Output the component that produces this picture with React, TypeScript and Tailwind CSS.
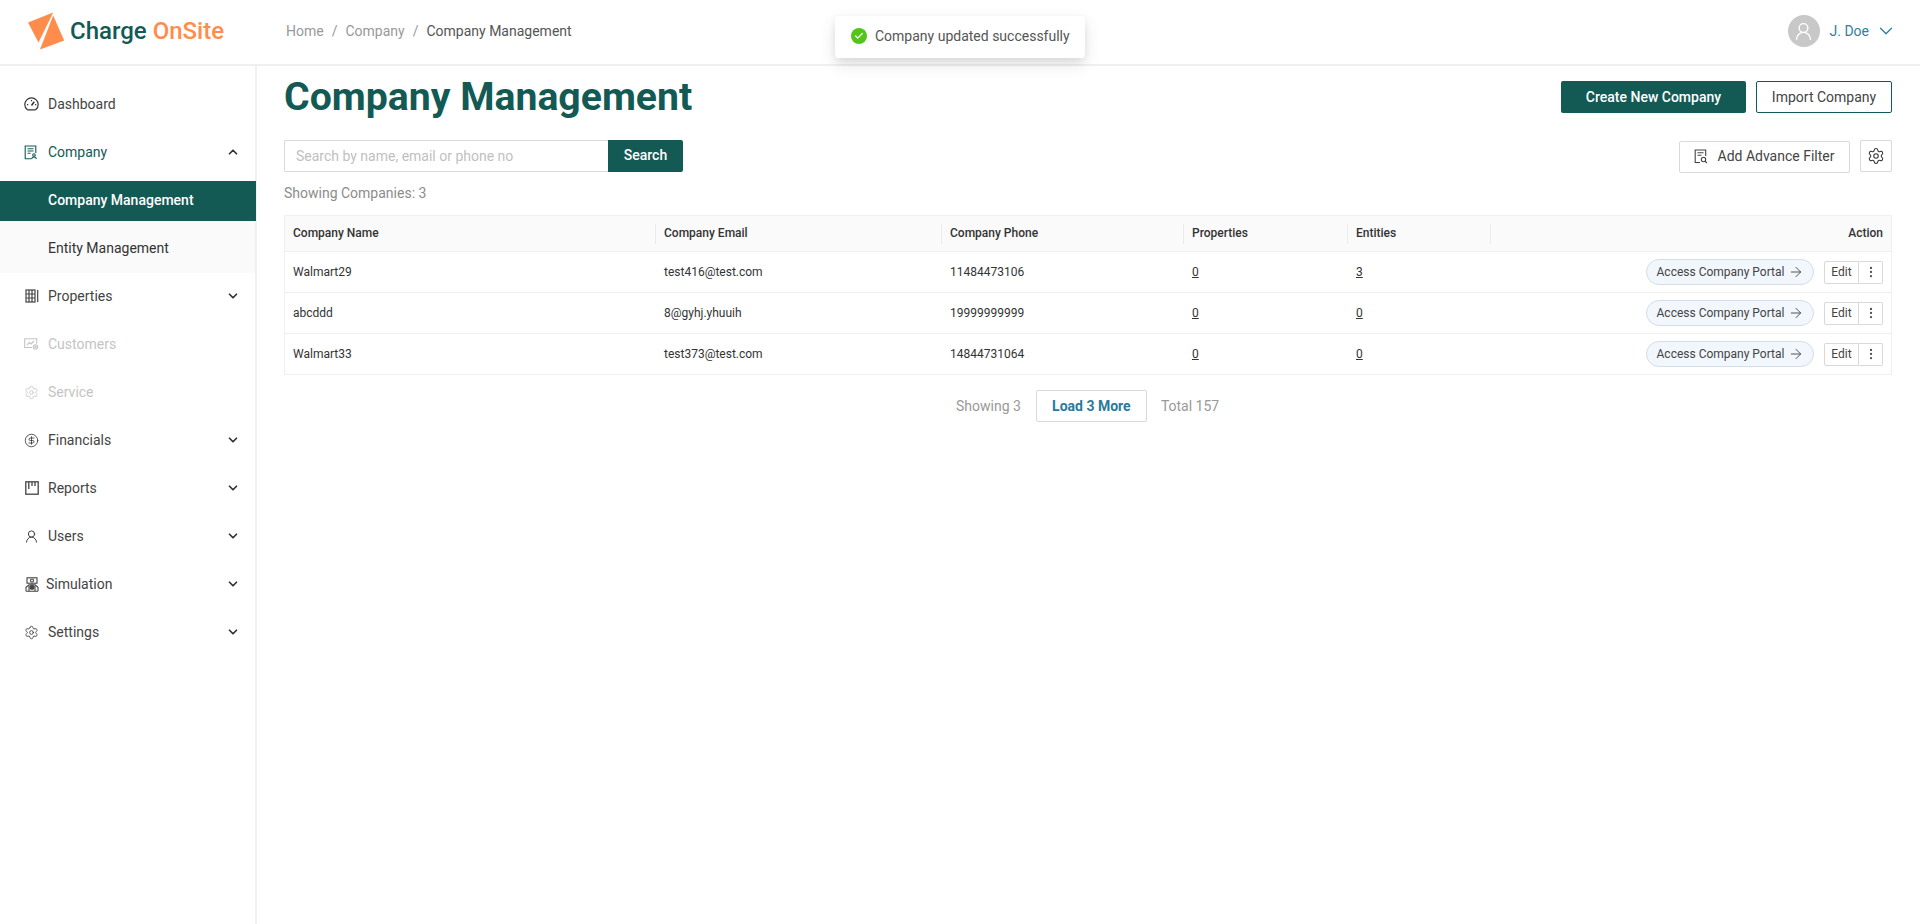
import React from "react";
import { Settings, CircleDollarSign, UserRound, ArrowRight, EllipsisVertical, ChevronDown, ChevronUp, Check } from "lucide-react";

const GaugeIcon = () => (
  <svg viewBox="0 0 15 14" width="15" height="14" fill="none" stroke="#333" strokeWidth="1.2">
    <path d="M3.2 12.6C1.6 11.4.8 9.6.8 7.6a6.7 6.7 0 0 1 13.4 0c0 2-.8 3.8-2.4 5-.2.2-.5.3-.8.3H4c-.3 0-.6-.1-.8-.3Z" />
    <path d="M7.5 8.5L10.2 4.8" strokeWidth="1.5" />
    <path d="M3 7.6h1.2M7.5 3v1.2M11 7.6h1.2" />
  </svg>
);
const CompanyIcon = ({ className = "" }: { className?: string }) => (
  <svg viewBox="0 0 14 15" width="14" height="15" fill="none" stroke="currentColor" strokeWidth="1.1" className={className}>
    <path d="M7.5 13.8H1.2V1h10.6v7" />
    <path d="M3.5 3.8h6M3.5 6h6M3.5 8.2h3" />
    <circle cx="10" cy="10" r="1.3" />
    <path d="M7.6 14c.3-1.4 1.2-2 2.4-2s2.1.6 2.4 2" />
  </svg>
);
const PropertiesIcon = () => (
  <svg viewBox="0 0 14 14" width="14" height="14" fill="none" stroke="#444" strokeWidth="1.2">
    <rect x="1" y="1" width="9" height="12" />
    <path d="M1 5h9M1 9h9M4 1v12M7 1v12M12.7 1v12" />
  </svg>
);
const CustomersIcon = () => (
  <svg viewBox="0 0 15 12" width="15" height="12" fill="none" stroke="currentColor" strokeWidth="1.1">
    <path d="M8 9.5H.7V.7h12v5" />
    <path d="M3 7l2.5-2.4 1.6 1.4L10 3" />
    <circle cx="11.5" cy="9" r="2.2" />
    <circle cx="11.5" cy="9" r=".6" />
  </svg>
);
const ReportsIcon = () => (
  <svg viewBox="0 0 14 14" width="14" height="14" fill="none" stroke="#444" strokeWidth="1.3">
    <rect x=".8" y=".8" width="12.4" height="12.4" />
    <path d="M3.8 1v7M7 1v4M10 1v4" />
  </svg>
);
const SimulationIcon = () => (
  <svg viewBox="0 0 14 15" width="14" height="15" fill="none" stroke="#444" strokeWidth="1.1">
    <rect x="2" y=".8" width="10" height="5.4" />
    <path d="M1 14.3v-4l3-2.5h6l3 2.5v4M1 14.3h12" />
    <circle cx="7" cy="3.5" r="1.5" />
    <circle cx="7" cy="10.2" r="2" fill="#444" />
    <path d="M4 8.5v5.8M10 8.5v5.8" />
  </svg>
);
const FilterDocIcon = () => (
  <svg viewBox="0 0 14 15" width="14" height="15" fill="none" stroke="#444" strokeWidth="1.1">
    <path d="M6 13.5H1.2V1h10.5v6" />
    <path d="M3.5 3.8h6M3.5 6.2h4" />
    <circle cx="9.5" cy="10.5" r="2.2" />
    <path d="M11 12.2l1.8 1.8" />
  </svg>
);
const Logo = () => (
  <svg viewBox="0 0 38 38" width="38" height="38" className="shrink-0">
    <path d="M25.2 0.5L0 10.5 10.5 30.5Z" fill="#ff8c4b" />
    <path d="M25.2 3.5L36.2 28.5 12 37.5Z" fill="#ff8c4b" />
  </svg>
);
const Chevron = ({ up }: { up?: boolean }) =>
  up ? <ChevronUp size={14} strokeWidth={3} className="text-[#333]" /> : <ChevronDown size={14} strokeWidth={3} className="text-[#333]" />;

const items = [
  { label: "Properties", icon: <PropertiesIcon />, chev: true },
  { label: "Customers", icon: <CustomersIcon />, off: true },
  { label: "Service", icon: <Settings size={17} strokeWidth={1.3} />, off: true },
  { label: "Financials", icon: <CircleDollarSign size={17} strokeWidth={1.3} className="text-[#333]" />, chev: true },
  { label: "Reports", icon: <ReportsIcon />, chev: true },
  { label: "Users", icon: <UserRound size={17} strokeWidth={1.5} className="text-[#333]" />, chev: true },
  { label: "Simulation", icon: <SimulationIcon />, chev: true, tight: true },
  { label: "Settings", icon: <Settings size={17} strokeWidth={1.3} className="text-[#333]" />, chev: true },
];

const rows = [
  ["Walmart29", "test416@test.com", "11484473106", "0", "3"],
  ["abcddd", "8@gyhj.yhuuih", "19999999999", "0", "0"],
  ["Walmart33", "test373@test.com", "14844731064", "0", "0"],
];

const cols = "grid grid-cols-[370px_286px_242px_164px_143px_1fr]";

const Head = ({ children, first }: { children: React.ReactNode; first?: boolean }) => (
  <div className={first ? "flex h-5 items-center pb-px pl-2" : "flex h-5 items-center border-l border-[#ececec] pb-px pl-2"}>{children}</div>
);

export default function App() {
  return (
    <div className="relative flex h-screen w-full flex-col overflow-hidden bg-white font-['Roboto',sans-serif] text-sm text-[#333]">
      <header className="flex h-[66px] shrink-0 items-center border-b-2 border-[#f0f0f0] pb-[3px] pl-[28px] pr-[23px]">
        <div className="flex w-[256px] items-center gap-[4px]">
          <Logo />
          <span className="whitespace-nowrap text-[24px] font-medium leading-none text-[#135a55]">
            Charge <span className="text-[#ff8c4b]">OnSite</span>
          </span>
        </div>
        <nav className="ml-[2px] flex items-center gap-[8px] text-sm text-[#999]">
          <span>Home</span>
          <span>/</span>
          <span>Company</span>
          <span>/</span>
          <span className="text-[#555]">Company Management</span>
        </nav>
        <div className="ml-auto flex items-center pt-px">
          <div className="flex h-8 w-8 items-center justify-center rounded-full bg-[#c8c8c8] text-white">
            <UserRound size={21} strokeWidth={1.6} />
          </div>
          <span className="ml-[10px] text-sm text-[#2f7f9f]">J. Doe</span>
          <ChevronDown size={22} strokeWidth={1.4} className="ml-[6px] text-[#2f7f9f]" />
        </div>
      </header>

      <div className="absolute left-[835px] top-[16px] z-10 flex h-[42px] w-[250px] items-center gap-[8px] rounded-[3px] bg-white pb-[2px] pl-[16px] text-sm text-[#555] shadow-[0_6px_16px_rgba(0,0,0,0.12),0_3px_6px_rgba(0,0,0,0.06)]">
        <span className="flex h-4 w-4 items-center justify-center rounded-full bg-[#52c41a]">
          <Check size={10} strokeWidth={3} className="text-white" />
        </span>
        <span>Company updated successfully</span>
      </div>

      <div className="flex min-h-0 flex-1">
        <aside className="w-[257px] shrink-0 border-r-2 border-[#f0f0f0] pt-[14px] text-sm text-[#444]">
          <div className="flex h-12 items-center pl-[24px] pr-[15px]">
            <GaugeIcon />
            <span className="ml-[9px]">Dashboard</span>
          </div>
          <div className="flex h-12 items-center pl-[24px] pr-[15px]">
            <CompanyIcon className="text-[#135a55]" />
            <span className="ml-[10px] text-[#135a55]">Company</span>
            <span className="ml-auto"><Chevron up /></span>
          </div>
          <div className="mt-[5px] bg-[#fafafa]">
            <div className="relative -mr-px flex h-10 items-center bg-[#135a55] pb-[2px] pl-[48px] font-medium text-white">Company Management</div>
            <div className="flex h-[52px] items-center pl-[48px] pt-px text-[#333]">Entity Management</div>
          </div>
          {items.map((it) => (
            <div key={it.label} className={it.off ? "flex h-12 items-center pb-[2px] pl-[24px] pr-[15px] text-[#c4c4c4]" : "flex h-12 items-center pb-[2px] pl-[24px] pr-[15px]"}>
              <span className="flex w-[15px] shrink-0 justify-center">{it.icon}</span>
              <span className={it.tight ? "ml-[7px]" : "ml-[9px]"}>{it.label}</span>
              {it.chev && <span className="ml-auto"><Chevron /></span>}
            </div>
          ))}
        </aside>

        <main className="min-w-0 flex-1 pl-[27px] pr-[28px] pt-[15px]">
          <div className="flex h-8 items-center justify-between">
            <h1 className="whitespace-nowrap text-[39.2px] font-bold leading-8 text-[#135a55]">Company Management</h1>
            <div className="flex gap-[10px]">
              <button className="h-8 w-[185px] rounded-[2px] bg-[#135a55] text-sm font-medium text-white">Create New Company</button>
              <button className="h-8 w-[136px] rounded-[2px] border border-[#135a55] bg-white text-sm text-[#444]">Import Company</button>
            </div>
          </div>

          <div className="mt-[27px] flex h-8 items-start justify-between">
            <div className="flex">
              <div className="flex h-8 w-[324px] items-center rounded-l-[2px] border border-r-0 border-[#d9d9d9] pl-[11px] text-sm text-[#bfbfbf]">Search by name, email or phone no</div>
              <button className="h-8 w-[75px] rounded-r-[2px] bg-[#135a55] pb-[2px] text-sm font-medium text-white">Search</button>
            </div>
            <div className="flex items-start gap-[10px]">
              <button className="mt-px flex h-8 w-[171px] items-center justify-center gap-[10px] rounded-[2px] border border-[#d9d9d9] bg-white pb-[2px] pr-px text-sm text-[#444]">
                <FilterDocIcon />
                Add Advance Filter
              </button>
              <button className="flex h-8 w-8 items-center justify-center rounded-[2px] border border-[#d9d9d9] bg-white">
                <Settings size={18} strokeWidth={1.4} className="text-[#333]" />
              </button>
            </div>
          </div>

          <div className="mt-[10px] text-sm leading-[22px] text-[#8c8c8c]">Showing Companies: 3</div>

          <div className="mt-[11px] border-x border-t border-[#f0f0f0] text-xs text-[#333]">
            <div className={`${cols} h-9 items-center border-b border-[#f0f0f0] bg-[#fafafa] font-medium`}>
              <Head first>Company Name</Head>
              <Head>Company Email</Head>
              <Head>Company Phone</Head>
              <Head>Properties</Head>
              <Head>Entities</Head>
              <div className="flex h-5 items-center justify-end border-l border-[#ececec] pb-px pr-2">Action</div>
            </div>
            {rows.map((r) => (
              <div key={r[0]} className={`${cols} h-[41px] items-center border-b border-[#f0f0f0]`}>
                <div className="pl-2">{r[0]}</div>
                <div className="pl-[9px]">{r[1]}</div>
                <div className="pl-[9px]">{r[2]}</div>
                <div className="pl-[9px]"><span className="underline">{r[3]}</span></div>
                <div className="pl-[9px]"><span className="underline">{r[4]}</span></div>
                <div className="flex items-center justify-end pr-2">
                  <button className="flex h-[26px] w-[168px] items-center justify-center gap-[4px] rounded-full border border-[#d5dde5] bg-[#f1f7fd] pb-px pl-px text-xs text-[#444]">
                    Access Company Portal
                    <ArrowRight size={16} strokeWidth={1.5} className="text-[#555]" />
                  </button>
                  <div className="ml-[10px] flex h-[23px]">
                    <button className="w-[35px] rounded-l-[2px] border border-[#d9d9d9] bg-white pb-px text-xs text-[#444]">Edit</button>
                    <button className="flex w-[24px] items-center justify-center rounded-r-[2px] border border-l-0 border-[#d9d9d9] bg-white">
                      <EllipsisVertical size={14} strokeWidth={2} className="text-[#555]" />
                    </button>
                  </div>
                </div>
              </div>
            ))}
          </div>

          <div className="ml-[672px] mt-[15px] flex items-center text-sm text-[#999]">
            <span>Showing 3</span>
            <button className="ml-[15px] h-8 w-[111px] rounded-[2px] border border-[#d9d9d9] bg-white text-sm font-bold text-[#2a7a9c]">Load 3 More</button>
            <span className="ml-[14px]">Total 157</span>
          </div>
        </main>
      </div>
    </div>
  );
}
